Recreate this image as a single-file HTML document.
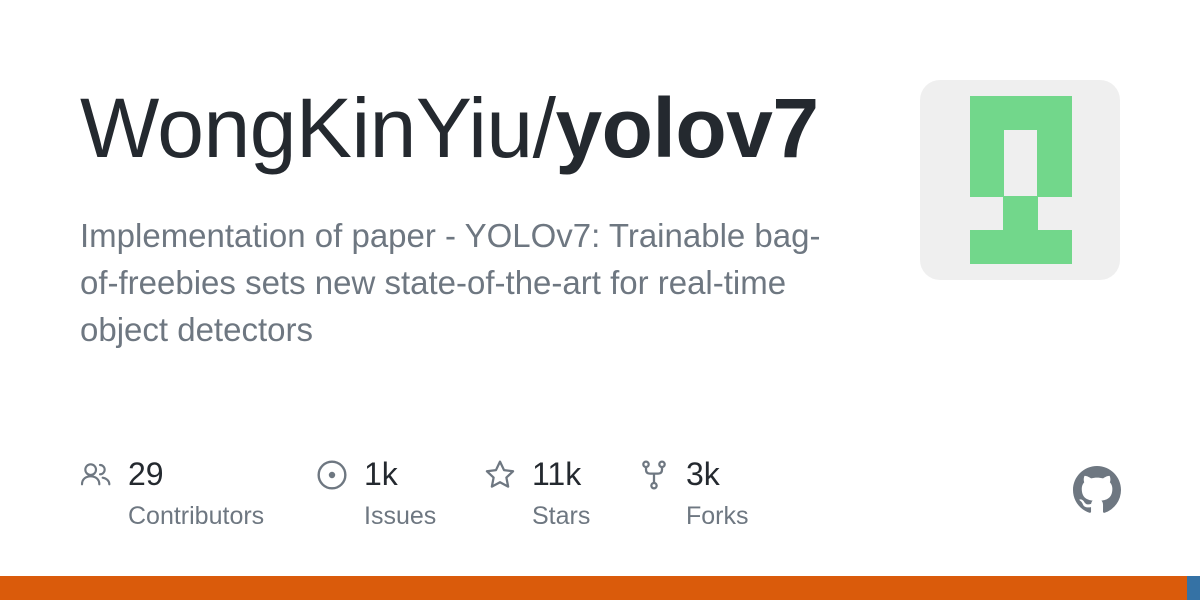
<!DOCTYPE html>
<html><head><style>
body{margin:0;width:1200px;height:600px;background:#fff;position:relative;overflow:hidden;font-family:"Liberation Sans",sans-serif}
.t{position:absolute;left:80px;top:80px;font-size:84px;color:#24292f;letter-spacing:-0.5px;white-space:nowrap}
.d{position:absolute;left:80px;top:212px;font-size:33px;line-height:47px;color:#6e7781;width:760px}
.av{position:absolute;left:920px;top:80px;width:200px;height:200px;background:#efefef;border-radius:20px}
.g{position:absolute;background:#72d78b}
.n{position:absolute;top:456px;font-size:32px;color:#24292f}
.l{position:absolute;top:502px;font-size:25px;color:#6e7781}
svg.i{position:absolute;top:459px}
</style></head><body>
<div class="t">WongKinYiu/<b>yolov7</b></div>
<div class="d">Implementation of paper - YOLOv7: Trainable bag-of-freebies sets new state-of-the-art for real-time object detectors</div>
<div class="av">
<div class="g" style="left:50px;top:16px;width:102px;height:34px"></div>
<div class="g" style="left:50px;top:16px;width:34px;height:101px"></div>
<div class="g" style="left:117px;top:16px;width:35px;height:101px"></div>
<div class="g" style="left:83px;top:116px;width:35px;height:36px"></div>
<div class="g" style="left:50px;top:150px;width:102px;height:34px"></div>
</div>
<svg class="i" style="left:80px" width="32" height="32" viewBox="0 0 24 24" fill="none" stroke="#6e7781" stroke-width="1.6" stroke-linecap="round"><circle cx="8" cy="8" r="4"/><path d="M1.5 19c0-4 3-6 6.5-6s6.5 2 6.5 6"/><path d="M15 4.5a3.5 3.5 0 0 1 0 7M17 14c3 .5 5 2.5 5 5"/></svg>
<div class="n" style="left:128px">29</div><div class="l" style="left:128px">Contributors</div>
<svg class="i" style="left:316px" width="32" height="32" viewBox="0 0 24 24" fill="none" stroke="#6e7781" stroke-width="1.8"><circle cx="12" cy="12" r="10"/><circle cx="12" cy="12" r="1.5" fill="#6e7781"/></svg>
<div class="n" style="left:364px">1k</div><div class="l" style="left:364px">Issues</div>
<svg class="i" style="left:484px" width="32" height="32" viewBox="0 0 24 24" fill="none" stroke="#6e7781" stroke-width="1.7" stroke-linejoin="round"><path d="M12 2l3 6.3 6.8.9-5 4.7 1.3 6.8L12 17.4l-6.1 3.3 1.3-6.8-5-4.7 6.8-.9z"/></svg>
<div class="n" style="left:532px">11k</div><div class="l" style="left:532px">Stars</div>
<svg class="i" style="left:638px" width="32" height="32" viewBox="0 0 24 24" fill="none" stroke="#6e7781" stroke-width="1.7"><circle cx="6" cy="4" r="2"/><circle cx="18" cy="4" r="2"/><circle cx="12" cy="20" r="2"/><path d="M6 6v2c0 2 1 3 3 3h6c2 0 3-1 3-3V6M12 11v7"/></svg>
<div class="n" style="left:686px">3k</div><div class="l" style="left:686px">Forks</div>
<svg style="position:absolute;left:1073px;top:466px" width="48" height="48" viewBox="0 0 16 16"><path fill="#6e7781" d="M8 0C3.58 0 0 3.58 0 8c0 3.54 2.29 6.53 5.47 7.59.4.07.55-.17.55-.38 0-.19-.01-.82-.01-1.49-2.01.37-2.53-.49-2.69-.94-.09-.23-.48-.94-.82-1.13-.28-.15-.68-.52-.01-.53.63-.01 1.08.58 1.23.82.72 1.21 1.87.87 2.33.66.07-.52.28-.87.51-1.07-1.780-.2-3.64-.89-3.64-3.95 0-.87.31-1.59.82-2.15-.08-.2-.36-1.02.08-2.12 0 0 .67-.21 2.2.82.64-.18 1.32-.27 2-.27.68 0 1.36.09 2 .27 1.53-1.04 2.2-.82 2.2-.82.44 1.1.16 1.92.08 2.12.51.56.82 1.27.82 2.15 0 3.07-1.87 3.75-3.65 3.95.29.25.54.73.54 1.48 0 1.07-.01 1.93-.01 2.2 0 .21.15.46.55.38A8.013 8.013 0 0016 8c0-4.42-3.58-8-8-8z"/></svg>
<div style="position:absolute;left:0;top:576px;width:1187px;height:24px;background:#da5b0b"></div>
<div style="position:absolute;left:1187px;top:576px;width:13px;height:24px;background:#3572a5"></div>
</body></html>
